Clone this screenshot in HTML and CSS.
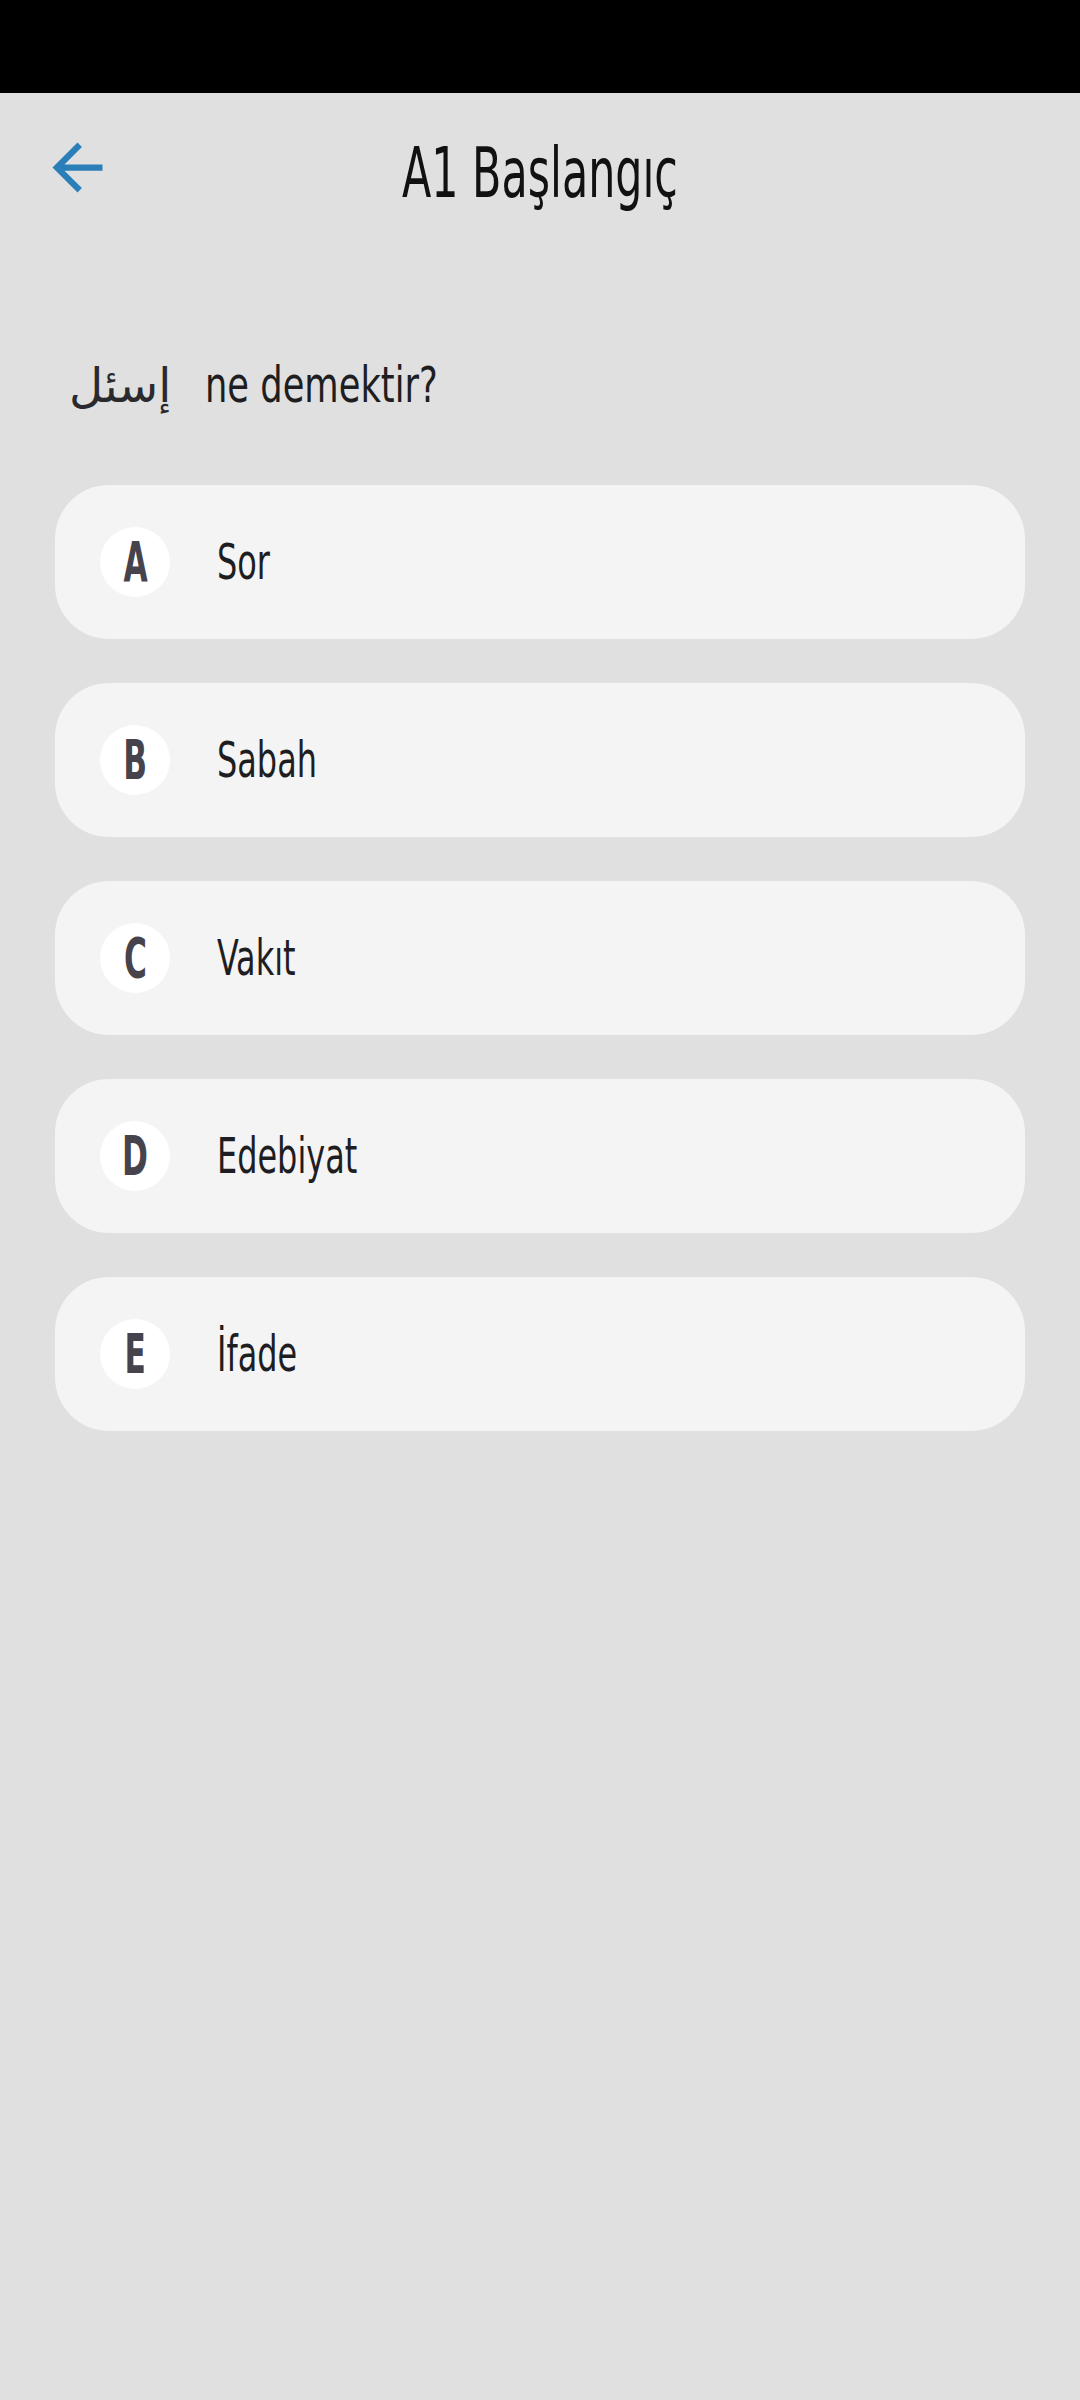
FILE: index.html
```html
<!DOCTYPE html>
<html lang="tr">
<head>
<meta charset="utf-8">
<title>A1 Başlangıç</title>
<link rel="stylesheet" href="styles.css">
</head>
<body>
<div class="status"></div>
<header class="header">
  <div class="back">
    <svg class="back-icon" viewBox="0 0 24 24" width="75" height="75">
      <path d="M20 11H7.83l5.59-5.59L12 4l-8 8 8 8 1.41-1.41L7.83 13H20v-2z" fill="#2b7fb8"/>
    </svg>
  </div>
  <h1 class="title"><span class="title-text">A1 Başlangıç</span></h1>
  <div></div>
</header>
<div class="question">
  <span class="arabic" dir="rtl" lang="ar">إسئل</span>
  <span class="q-text">ne demektir?</span>
</div>
<div class="options">
  <div class="card"><span class="badge"><span class="letter">A</span></span><span class="answer">Sor</span></div>
  <div class="card"><span class="badge"><span class="letter">B</span></span><span class="answer">Sabah</span></div>
  <div class="card"><span class="badge"><span class="letter">C</span></span><span class="answer">Vakıt</span></div>
  <div class="card"><span class="badge"><span class="letter">D</span></span><span class="answer">Edebiyat</span></div>
  <div class="card"><span class="badge"><span class="letter">E</span></span><span class="answer">İfade</span></div>
</div>
</body>
</html>
```
FILE: styles.css
```css
html, body {
  margin: 0;
  padding: 0;
}
body {
  width: 1080px;
  height: 2400px;
  background: #e0e0e0;
  font-family: "DejaVu Sans Condensed", "Liberation Sans", sans-serif;
  overflow: hidden;
}
.status {
  height: 93px;
  background: #000;
}
.header {
  height: 154px;
  display: grid;
  grid-template-columns: 1fr auto 1fr;
  align-items: center;
}
.back {
  padding-left: 40px;
  display: flex;
  align-items: center;
  height: 75px;
  margin-top: -6px;
}
.back-icon {
  display: block;
}
.title {
  margin: 0;
  padding-top: 6px;
  font-weight: normal;
  font-size: 70px;
  line-height: 70px;
  color: #111;
  text-align: center;
}
.title-text {
  display: inline-block;
  transform: scaleX(0.68);
  transform-origin: center;
}
.question {
  margin-top: 113px;
  height: 52px;
  display: flex;
  align-items: center;
  padding-left: 69px;
  gap: 34px;
}
.arabic {
  font-family: "DejaVu Sans", sans-serif;
  font-size: 47px;
  line-height: 52px;
  color: #2a2a2e;
}
.q-text {
  font-size: 49px;
  line-height: 52px;
  color: #1e1e22;
  display: inline-block;
  transform: scaleX(0.8);
  transform-origin: left center;
}
.options {
  margin-top: 73px;
  padding: 0 55px;
  display: flex;
  flex-direction: column;
  gap: 44px;
}
.card {
  height: 154px;
  border-radius: 54px;
  background: #f4f4f4;
  display: flex;
  align-items: center;
  padding-left: 45px;
  gap: 47px;
}
.badge {
  width: 70px;
  height: 70px;
  border-radius: 50%;
  background: #fff;
  display: flex;
  align-items: center;
  justify-content: center;
  flex: none;
}
.letter {
  display: inline-block;
  font-weight: bold;
  font-size: 56px;
  line-height: 56px;
  color: #46434c;
  transform: scaleX(0.62);
}
.answer {
  display: inline-block;
  font-size: 50px;
  line-height: 50px;
  color: #1e1e22;
  transform: scaleX(0.71);
  transform-origin: left center;
}
```
